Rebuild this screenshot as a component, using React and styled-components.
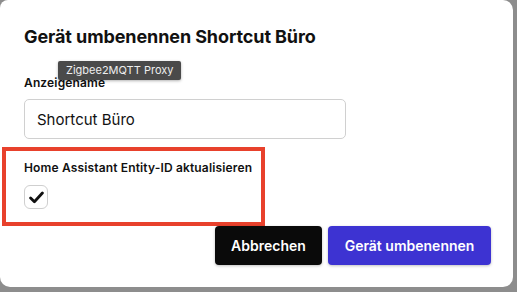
import styled, { createGlobalStyle } from "styled-components";

const GlobalStyle = createGlobalStyle`
  html, body {
    margin: 0;
    padding: 0;
    background: #8d8d8d;
    font-family: Inter, "Noto Sans", "Liberation Sans", sans-serif;
    color: #111;
  }
`;

const Dialog = styled.div`
  width: 513px;
  height: 287px;
  box-sizing: border-box;
  background: #fff;
  border-radius: 8px 10px 10px 10px;
  padding: 26px 22px 0 24px;
  display: flex;
  flex-direction: column;
`;

const Title = styled.h2`
  margin: 0;
  font-size: 18px;
  font-weight: 700;
  line-height: 22px;
  letter-spacing: -0.1px;
`;

const Field = styled.div`
  position: relative;
  display: flex;
  flex-direction: column;
  align-items: flex-start;
  margin-top: 27px;
`;

const Label = styled.label`
  font-size: 12px;
  font-weight: 600;
  line-height: 15px;
  white-space: nowrap;
  letter-spacing: 0.15px;
`;

const Tooltip = styled.div`
  position: absolute;
  left: 34px;
  top: -14px;
  background: #4a4a4a;
  color: #eee;
  font-size: 11px;
  line-height: 19px;
  padding: 0 8px;
  border-radius: 2px;
  box-shadow: 0 1px 3px rgba(0, 0, 0, 0.3);
`;

const Input = styled.div`
  margin-top: 9px;
  width: 322px;
  height: 40px;
  box-sizing: border-box;
  border: 1px solid #d0d0d0;
  border-radius: 5px;
  padding: 0 12px;
  display: flex;
  align-items: center;
  font-size: 15px;
`;

const Highlight = styled.div`
  margin-top: 8px;
  margin-left: -22px;
  width: 263px;
  box-sizing: border-box;
  border: 4px solid #e8412c;
  padding: 9px 4px 13px 18px;
  display: flex;
  flex-direction: column;
  align-items: flex-start;
  gap: 10px;
`;

const Checkbox = styled.div`
  width: 24px;
  height: 24px;
  box-sizing: border-box;
  border: 1px solid #cfcfcf;
  border-radius: 6px;
  display: flex;
  align-items: center;
  justify-content: center;
`;

const Footer = styled.div`
  display: flex;
  justify-content: flex-end;
  gap: 6px;
`;

const Button = styled.button`
  height: 39px;
  width: ${(p) => p.$w}px;
  border: none;
  border-radius: 4px;
  background: ${(p) => (p.$primary ? "#3d33d2" : "#0a0a0a")};
  color: #fff;
  font-family: inherit;
  font-size: 14px;
  font-weight: 600;
  box-shadow: 0 1px 3px rgba(0, 0, 0, 0.25);
`;

export default function App() {
  return (
    <>
      <GlobalStyle />
      <Dialog>
        <Title>Gerät umbenennen Shortcut Büro</Title>
        <Field>
          <Label>Anzeigename</Label>
          <Tooltip>Zigbee2MQTT Proxy</Tooltip>
          <Input>Shortcut Büro</Input>
        </Field>
        <Highlight>
          <Label>Home Assistant Entity-ID aktualisieren</Label>
          <Checkbox>
            <svg width="15" height="13" viewBox="0 0 15 13">
              <path
                d="M1.6 7 L5.4 10.8 L13.4 2"
                fill="none"
                stroke="#111"
                strokeWidth="2.8"
                strokeLinecap="round"
                strokeLinejoin="round"
              />
            </svg>
          </Checkbox>
        </Highlight>
        <Footer>
          <Button $w={107}>Abbrechen</Button>
          <Button $w={163} $primary>
            Gerät umbenennen
          </Button>
        </Footer>
      </Dialog>
    </>
  );
}
